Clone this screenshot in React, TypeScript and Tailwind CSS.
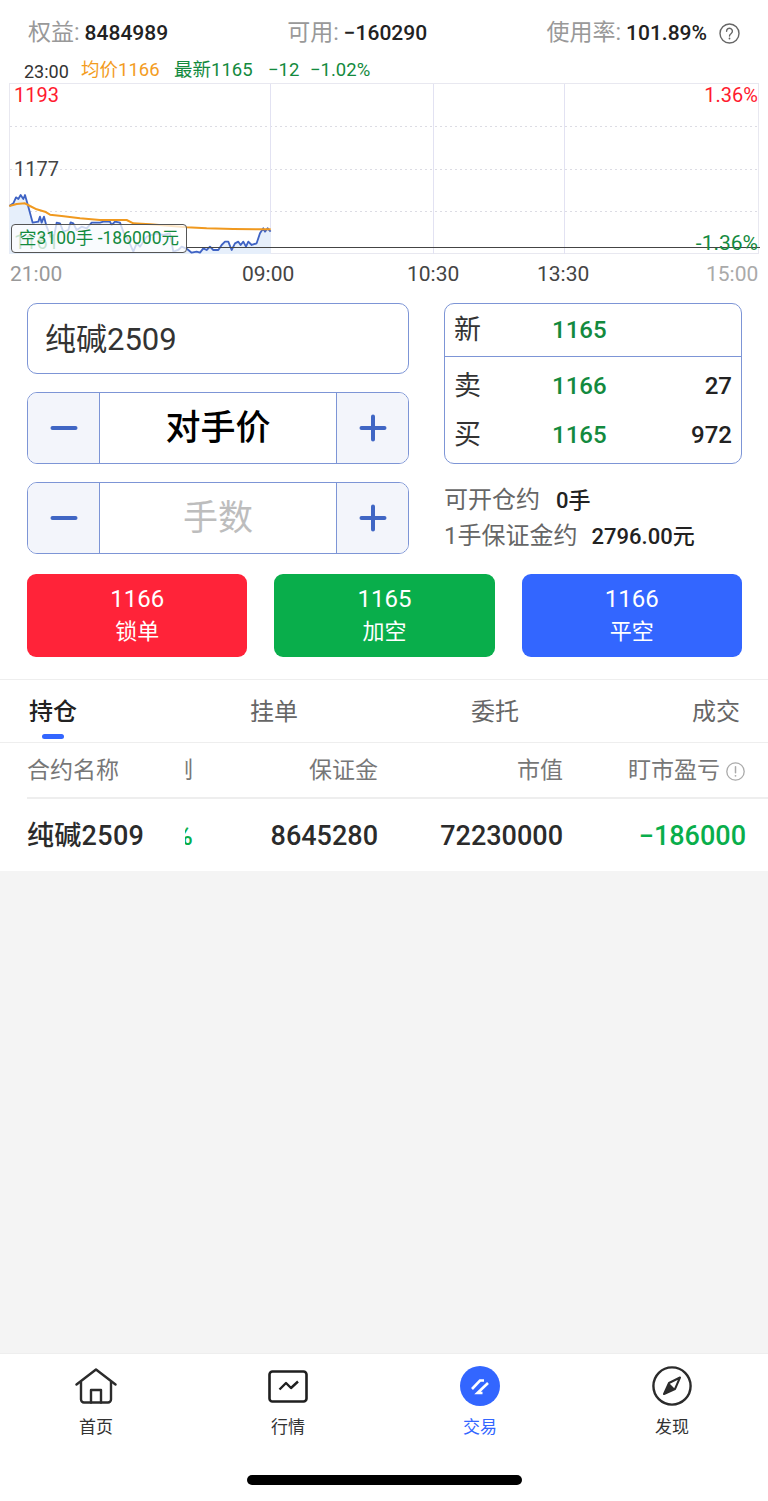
const priceLine =
  "28,48 40,40 48,22 55,27 62,15 70,27 75,15 85,50 98,98 115,95 120,80 125,98 132,80 140,110 150,135 160,150 170,98 180,100 190,125 205,120 212,97 220,100 230,120 245,110 260,115 275,98 300,98 310,95 330,95 335,105 345,95 360,98 370,125 385,150 400,185 410,160 420,170 440,140 470,130 490,135 510,130 520,185 535,180 545,170 558,175 565,180 575,188 590,185 600,188 610,175 620,180 630,170 640,180 655,180 665,165 675,155 685,155 695,180 705,160 715,155 722,165 730,155 738,170 745,155 755,165 770,160 780,130 790,115 795,125 803,115 812,125";
const avgLine =
  "28,48 50,42 75,40 90,48 110,58 135,65 150,74 185,78 240,85 300,90 380,90 400,100 450,103 560,112 620,115 700,117 812,118";

const font = "font-['Roboto','Noto_Sans_CJK_SC',sans-serif]";

function Minus() {
  return (
    <svg width="28" height="28" viewBox="0 0 28 28">
      <path d="M2.5 14h23" stroke="#4066c4" strokeWidth="4" strokeLinecap="round" />
    </svg>
  );
}

function Plus() {
  return (
    <svg width="28" height="28" viewBox="0 0 28 28">
      <path d="M2.5 14h23M14 2.5v23" stroke="#4066c4" strokeWidth="4" strokeLinecap="round" />
    </svg>
  );
}

function Stepper({ label, muted }: { label: string; muted?: boolean }) {
  return (
    <div className="flex h-[72px] overflow-hidden rounded-[10px] border border-[#7d95d6]">
      <div className="flex w-[72px] items-center justify-center border-r border-[#7d95d6] bg-[#f3f5fb]">
        <Minus />
      </div>
      <div
        className={`flex flex-1 items-center justify-center text-[35px] ${muted ? "pt-[2px] text-[#bdbdbd]" : "pt-[3px] font-medium text-black"}`}
      >
        {label}
      </div>
      <div className="flex w-[72px] items-center justify-center border-l border-[#7d95d6] bg-[#f3f5fb]">
        <Plus />
      </div>
    </div>
  );
}

function QuoteRow({ side, price, volume }: { side: string; price: string; volume?: string }) {
  return (
    <div className="flex h-[36px] items-center px-[9px]">
      <span className="w-[98px] text-[27px] text-[#333]">{side}</span>
      <span className="text-[24px] font-medium text-[#138a3e]">{price}</span>
      <span className="ml-auto text-[24px] font-medium text-[#222]">{volume}</span>
    </div>
  );
}

function TradeButton({ price, label, color }: { price: string; label: string; color: string }) {
  return (
    <div className={`flex h-[83px] flex-1 flex-col items-center justify-center rounded-[9px] pb-[2px] text-white ${color}`}>
      <span className="text-[24px] leading-[34px]">{price}</span>
      <span className="text-[22px] leading-[32px]">{label}</span>
    </div>
  );
}

function Chart() {
  return (
    <div className="relative mx-[9px] h-[171px] border border-[#e8e8f0] bg-white">
      <svg className="absolute left-[-10px] top-[-84px]" width="768" height="290" viewBox="0 0 768 290">
        <path d="M10 126.5H760M10 169.5H760M10 211.5H760" stroke="#dcdce4" strokeDasharray="2 3" />
        <path d="M270.5 84V254M433.5 84V254M564.5 84V254" stroke="#e2e2f2" />
        <g transform="translate(0 190) scale(0.3333)">
          <polygon points={`28,192 ${priceLine} 812,192`} fill="#e6effb" />
          <polyline points={priceLine} fill="none" stroke="#3f63c4" strokeWidth="5.5" strokeLinejoin="round" />
          <polyline points={avgLine} fill="none" stroke="#f0991f" strokeWidth="6" strokeLinejoin="round" />
        </g>
        <path d="M186 247.5H760" stroke="#444" />
      </svg>
      <span className="absolute left-[4px] top-0 text-[20px] leading-[22px] text-[#ff1a2e]">1193</span>
      <span className="absolute right-0 top-0 text-[20px] leading-[22px] text-[#ff1a2e]">1.36%</span>
      <span className="absolute left-[4px] top-[73px] text-[20px] leading-[24px] text-[#444]">1177</span>
      <span className="absolute left-[4px] top-[146px] text-[20px] leading-[24px] text-[#138a3e]">1161</span>
      <span className="absolute right-0 top-[147px] text-[21px] leading-[24px] text-[#138a3e]">-1.36%</span>
      <div className="absolute left-[1px] top-[140px] flex h-[29px] w-[176px] items-center justify-center rounded-[4px] border border-[#555] bg-white/75 text-[17.5px] whitespace-nowrap text-[#138a3e]">
        空3100手 -186000元
      </div>
    </div>
  );
}

function NavItem({ label, active, children }: { label: string; active?: boolean; children: React.ReactNode }) {
  return (
    <div className="flex w-[192px] flex-col items-center">
      <div className="flex h-[40px] items-center justify-center">{children}</div>
      <span className={`mt-[9px] text-[17px] leading-[24px] ${active ? "text-[#3366ff]" : "text-[#333]"}`}>{label}</span>
    </div>
  );
}

export default function App() {
  return (
    <div className={`flex h-[1501px] w-[768px] flex-col overflow-hidden bg-[#f4f4f4] ${font}`}>
      <div className="h-[871px] bg-white">
        <div className="flex h-[58px] items-center px-[28px] pt-[9px]">
          <span className="text-[23px] text-[#999]">权益:</span>
          <span className="ml-[5px] text-[21px] font-medium text-[#222]">8484989</span>
          <span className="ml-[119px] text-[23px] text-[#999]">可用:</span>
          <span className="ml-[5px] text-[21px] font-medium text-[#222]">−160290</span>
          <span className="ml-auto text-[23px] text-[#999]">使用率:</span>
          <span className="ml-[5px] text-[21px] font-medium text-[#222]">101.89%</span>
          <svg className="ml-[12px]" width="21" height="21" viewBox="0 0 21 21" fill="none">
            <circle cx="10.5" cy="10.5" r="9.5" stroke="#666" strokeWidth="1.4" />
            <path d="M7.6 8.2a2.9 2.9 0 1 1 4.6 2.3c-1 .7-1.7 1.2-1.7 2.5" stroke="#666" strokeWidth="1.4" strokeLinecap="round" />
            <circle cx="10.5" cy="15.5" r="0.9" fill="#666" />
          </svg>
        </div>
        <div className="flex h-[25px] items-center pl-[24px] pt-[1px] text-[18.5px] whitespace-nowrap">
          <span className="w-[57px] text-[18px] text-[#333]">23:00</span>
          <span className="w-[93px] text-[#f39c1f]">均价1166</span>
          <span className="w-[94px] text-[#138a3e]">最新1165</span>
          <span className="w-[42px] text-[#138a3e]">−12</span>
          <span className="text-[#138a3e]">−1.02%</span>
        </div>
        <Chart />
        <div className="flex h-[38px] items-center pl-[10px] pt-[3px] text-[21px] text-[#444]">
          <span className="w-[232px] text-[#999]">21:00</span>
          <span className="w-[165px]">09:00</span>
          <span className="w-[130px]">10:30</span>
          <span className="w-[169px]">13:30</span>
          <span className="text-[#aaa]">15:00</span>
        </div>

        <div className="mt-[11px] flex justify-between pl-[27px] pr-[26px]">
          <div className="flex w-[382px] flex-col gap-[18px]">
            <div className="flex h-[71px] items-center rounded-[10px] border border-[#7d95d6] pl-[17px] pt-[3px] text-[31px] text-[#333]">
              纯碱2509
            </div>
            <Stepper label="对手价" />
            <Stepper label="手数" muted />
          </div>
          <div className="w-[298px]">
            <div className="h-[161px] rounded-[10px] border border-[#7d95d6]">
              <div className="flex h-[53px] items-center border-b border-[#7d95d6]">
                <div className="w-full">
                  <QuoteRow side="新" price="1165" />
                </div>
              </div>
              <div className="flex flex-col gap-[13px] pt-[11px]">
                <QuoteRow side="卖" price="1166" volume="27" />
                <QuoteRow side="买" price="1165" volume="972" />
              </div>
            </div>
            <div className="mt-[18px] text-[24px] text-[#666] whitespace-nowrap">
              <div className="flex h-[36px] items-center">
                可开仓约<span className="ml-[16px] text-[22px] font-medium text-[#222]">0手</span>
              </div>
              <div className="flex h-[36px] items-center">
                1手保证金约<span className="ml-[14px] text-[22px] font-medium text-[#222]">2796.00元</span>
              </div>
            </div>
          </div>
        </div>

        <div className="mt-[20px] flex gap-[27px] pl-[27px] pr-[26px]">
          <TradeButton price="1166" label="锁单" color="bg-[#ff2339]" />
          <TradeButton price="1165" label="加空" color="bg-[#09ae4b]" />
          <TradeButton price="1166" label="平空" color="bg-[#3366ff]" />
        </div>

        <div className="mt-[22px] flex h-[64px] items-center justify-between border-y border-[#eeeeee] pl-[29px] pr-[28px] pt-[1px] text-[24px] text-[#666]">
          <span className="relative font-medium text-[#222]">
            持仓
            <span className="absolute bottom-[-9px] left-[13px] h-[5px] w-[22px] rounded-full bg-[#3366ff]"></span>
          </span>
          <span>挂单</span>
          <span>委托</span>
          <span>成交</span>
        </div>

        <div className="ml-[27px] flex h-[56px] items-center border-b-2 border-[#eeeeee] pr-[23px] pt-[3px] text-[23px] text-[#777]">
          <span className="w-[158px]">合约名称</span>
          <span className="flex w-[8px] justify-end overflow-hidden whitespace-nowrap">比例</span>
          <span className="w-[185px] text-right">保证金</span>
          <span className="w-[185px] text-right">市值</span>
          <span className="flex flex-1 items-center justify-end whitespace-nowrap">
            盯市盈亏
            <svg className="ml-[6px]" width="19" height="19" viewBox="0 0 19 19" fill="none">
              <circle cx="9.5" cy="9.5" r="8.7" stroke="#aaa" strokeWidth="1.3" />
              <path d="M9.5 4.8v6" stroke="#aaa" strokeWidth="1.5" strokeLinecap="round" />
              <circle cx="9.5" cy="13.8" r="0.9" fill="#aaa" />
            </svg>
          </span>
        </div>

        <div className="ml-[27px] flex h-[72px] items-center pr-[22px] pt-[3px] text-[27px] font-medium text-[#2b2b2b]">
          <span className="w-[158px] tracking-[0.3px]">纯碱2509</span>
          <span className="flex w-[8px] justify-end overflow-hidden whitespace-nowrap text-[#09ae4b]">-2.15%</span>
          <span className="w-[185px] text-right">8645280</span>
          <span className="w-[185px] text-right">72230000</span>
          <span className="flex-1 text-right text-[#09ae4b]">−186000</span>
        </div>
      </div>

      <div className="mt-[482px] flex h-[148px] flex-col border-t border-[#eeeeee] bg-white">
        <div className="flex pt-[12px]">
          <NavItem label="首页">
            <svg width="42" height="36" viewBox="0 0 42 36" fill="none" stroke="#2b2b2b" strokeWidth="2.4" strokeLinejoin="round" strokeLinecap="round">
              <path d="M1.5 16.5 21 1.5l19.5 15" />
              <path d="M6 14v17.5a3 3 0 0 0 3 3h24a3 3 0 0 0 3-3V14" />
              <path d="M16 34.5V22h10v12.5" />
            </svg>
          </NavItem>
          <NavItem label="行情">
            <svg width="40" height="33" viewBox="0 0 40 33" fill="none" stroke="#1f1f1f" strokeWidth="2.6" strokeLinejoin="round">
              <rect x="1.5" y="1.5" width="37" height="30" rx="3" />
              <path d="M11.5 19.5 18 13l5 5 7-6.5" strokeWidth="2.4" />
            </svg>
          </NavItem>
          <NavItem label="交易" active>
            <svg width="40" height="40" viewBox="0 0 40 40">
              <circle cx="20" cy="20" r="20" fill="#3366ff" />
              <path d="M12 23 20 14.5h4M28 17 17.5 27h5" fill="none" stroke="#fff" strokeWidth="2.6" />
            </svg>
          </NavItem>
          <NavItem label="发现">
            <svg width="40" height="40" viewBox="0 0 40 40" fill="none">
              <circle cx="20" cy="20" r="18.6" stroke="#2b2b2b" strokeWidth="2.4" />
              <path d="M28 11.5 23 23 12 28 17 17Z" stroke="#2b2b2b" strokeWidth="2" strokeLinejoin="round" />
              <path d="M17 17 23 23 12 28Z" fill="#2b2b2b" />
            </svg>
          </NavItem>
        </div>
        <div className="mt-[36px] flex justify-center">
          <div className="h-[10px] w-[275px] rounded-full bg-black"></div>
        </div>
      </div>
    </div>
  );
}
